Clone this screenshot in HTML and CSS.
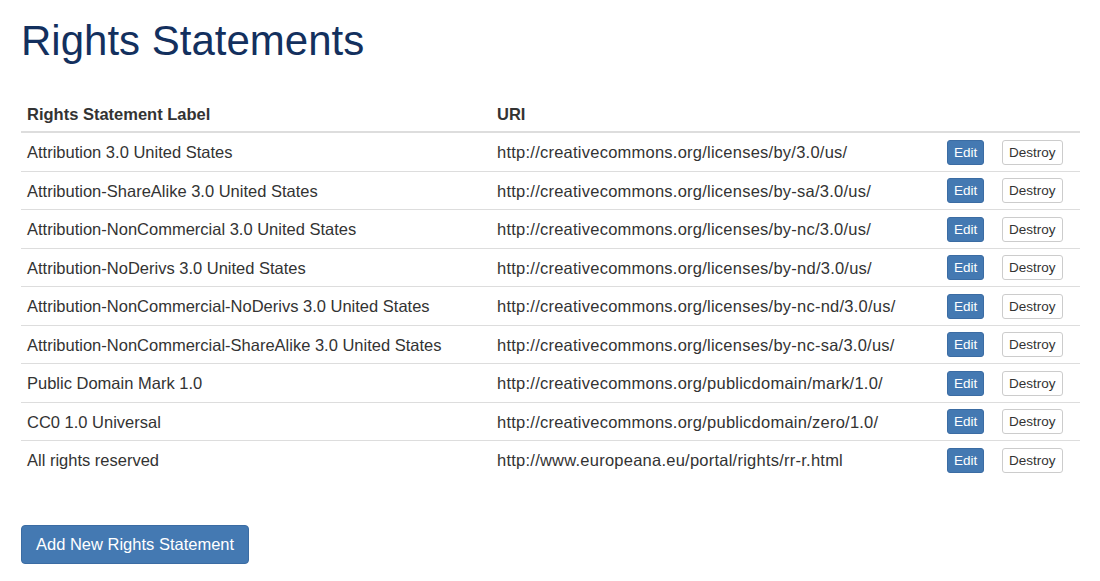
FILE: index.html
```html
<!DOCTYPE html>
<html>
<head>
<meta charset="utf-8">
<title>Rights Statements</title>
<link rel="stylesheet" href="styles.css">
</head>
<body>
<div class="page">
  <h1 class="title">Rights Statements</h1>
  <table class="rights-table">
    <colgroup>
      <col class="col-label">
      <col class="col-uri">
      <col class="col-edit">
      <col class="col-destroy">
    </colgroup>
    <thead>
      <tr>
        <th>Rights Statement Label</th>
        <th>URI</th>
        <th></th>
        <th></th>
      </tr>
    </thead>
    <tbody>
      <tr><td>Attribution 3.0 United States</td><td class="uri">http://creativecommons.org/licenses/by/3.0/us/</td><td class="act"><a class="btn btn-edit">Edit</a></td><td class="act"><a class="btn btn-destroy">Destroy</a></td></tr>
      <tr><td>Attribution-ShareAlike 3.0 United States</td><td class="uri">http://creativecommons.org/licenses/by-sa/3.0/us/</td><td class="act"><a class="btn btn-edit">Edit</a></td><td class="act"><a class="btn btn-destroy">Destroy</a></td></tr>
      <tr><td>Attribution-NonCommercial 3.0 United States</td><td class="uri">http://creativecommons.org/licenses/by-nc/3.0/us/</td><td class="act"><a class="btn btn-edit">Edit</a></td><td class="act"><a class="btn btn-destroy">Destroy</a></td></tr>
      <tr><td>Attribution-NoDerivs 3.0 United States</td><td class="uri">http://creativecommons.org/licenses/by-nd/3.0/us/</td><td class="act"><a class="btn btn-edit">Edit</a></td><td class="act"><a class="btn btn-destroy">Destroy</a></td></tr>
      <tr><td>Attribution-NonCommercial-NoDerivs 3.0 United States</td><td class="uri">http://creativecommons.org/licenses/by-nc-nd/3.0/us/</td><td class="act"><a class="btn btn-edit">Edit</a></td><td class="act"><a class="btn btn-destroy">Destroy</a></td></tr>
      <tr><td>Attribution-NonCommercial-ShareAlike 3.0 United States</td><td class="uri">http://creativecommons.org/licenses/by-nc-sa/3.0/us/</td><td class="act"><a class="btn btn-edit">Edit</a></td><td class="act"><a class="btn btn-destroy">Destroy</a></td></tr>
      <tr><td>Public Domain Mark 1.0</td><td class="uri">http://creativecommons.org/publicdomain/mark/1.0/</td><td class="act"><a class="btn btn-edit">Edit</a></td><td class="act"><a class="btn btn-destroy">Destroy</a></td></tr>
      <tr><td>CC0 1.0 Universal</td><td class="uri">http://creativecommons.org/publicdomain/zero/1.0/</td><td class="act"><a class="btn btn-edit">Edit</a></td><td class="act"><a class="btn btn-destroy">Destroy</a></td></tr>
      <tr><td>All rights reserved</td><td class="uri">http://www.europeana.eu/portal/rights/rr-r.html</td><td class="act"><a class="btn btn-edit">Edit</a></td><td class="act"><a class="btn btn-destroy">Destroy</a></td></tr>
    </tbody>
  </table>
  <a class="btn-add">Add New Rights Statement</a>
</div>
</body>
</html>
```

FILE: styles.css
```css
html, body {
  margin: 0;
  padding: 0;
  background: #fff;
}
body {
  font-family: "Liberation Sans", Arial, Helvetica, sans-serif;
  font-size: 16.5px;
  color: #333;
}
.page {
  padding: 0 20px 0 21px;
}
.title {
  margin: 17px 0 32px 0;
  font-size: 42px;
  font-weight: 400;
  line-height: 1.13;
  color: #13305e;
}
.rights-table {
  width: 1059px;
  border-collapse: collapse;
  border-spacing: 0;
  table-layout: fixed;
}
.col-label { width: 470px; }
.col-uri { width: 450px; }
.col-edit { width: 55px; }
.col-destroy { width: 84px; }
.rights-table th {
  text-align: left;
  font-weight: 700;
  padding: 6px 6px 5px 6px;
  line-height: 24px;
  border-bottom: 2px solid #ddd;
  vertical-align: bottom;
}
.rights-table td {
  padding: 6.75px 6px;
  line-height: 24px;
  border-top: 1px solid #ddd;
  vertical-align: middle;
  white-space: nowrap;
}
.rights-table td.uri {
  letter-spacing: 0.24px;
}
.rights-table tbody tr:first-child td {
  border-top: 0;
}
.rights-table td.act {
  padding: 6.25px 6px;
}
.btn {
  display: block;
  width: fit-content;
  box-sizing: border-box;
  height: 25px;
  line-height: 23px;
  padding: 0 6px;
  font-size: 13.5px;
  border: 1px solid transparent;
  border-radius: 3px;
  cursor: pointer;
}
.btn-edit {
  background: #4479b2;
  border-color: #3b6ca3;
  color: #fff;
}
.btn-destroy {
  background: #fff;
  border-color: #ccc;
  color: #333;
}
.btn-add {
  display: inline-block;
  margin-top: 46px;
  padding: 6.5px 14px;
  line-height: 24px;
  font-size: 16.5px;
  color: #fff;
  background: #4479b2;
  border: 1px solid #3b6ca3;
  border-radius: 4px;
  cursor: pointer;
}
```
